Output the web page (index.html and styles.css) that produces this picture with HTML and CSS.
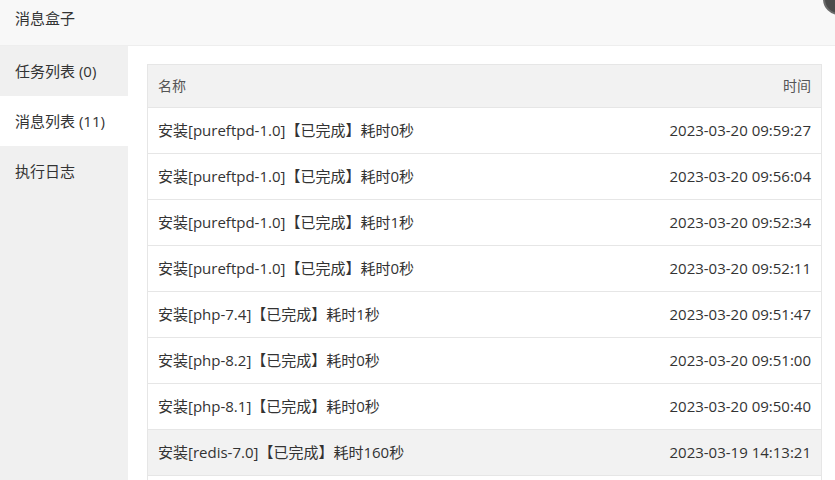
FILE: index.html
```html
<!DOCTYPE html>
<html lang="zh-CN">
<head>
  <meta charset="UTF-8" />
  <title>消息盒子</title>
  <link rel="stylesheet" href="styles.css">
</head>
<body>
  <div class="box">
    <header class="box-title">消息盒子</header>
    <span class="close-btn"></span>
    <div class="box-body">
      <nav class="side">
        <div class="side-item">任务列表 (0)</div>
        <div class="side-item active">消息列表 (11)</div>
        <div class="side-item">执行日志</div>
      </nav>
      <section class="content">
        <table class="msg-table">
          <thead>
            <tr><th>名称</th><th class="right">时间</th></tr>
          </thead>
          <tbody>
            <tr><td>安装[pureftpd-1.0]【已完成】耗时0秒</td><td class="right">2023-03-20 09:59:27</td></tr>
            <tr><td>安装[pureftpd-1.0]【已完成】耗时0秒</td><td class="right">2023-03-20 09:56:04</td></tr>
            <tr><td>安装[pureftpd-1.0]【已完成】耗时1秒</td><td class="right">2023-03-20 09:52:34</td></tr>
            <tr><td>安装[pureftpd-1.0]【已完成】耗时0秒</td><td class="right">2023-03-20 09:52:11</td></tr>
            <tr><td>安装[php-7.4]【已完成】耗时1秒</td><td class="right">2023-03-20 09:51:47</td></tr>
            <tr><td>安装[php-8.2]【已完成】耗时0秒</td><td class="right">2023-03-20 09:51:00</td></tr>
            <tr><td>安装[php-8.1]【已完成】耗时0秒</td><td class="right">2023-03-20 09:50:40</td></tr>
            <tr class="hover"><td>安装[redis-7.0]【已完成】耗时160秒</td><td class="right">2023-03-19 14:13:21</td></tr>
            <tr><td></td><td></td></tr>
          </tbody>
        </table>
      </section>
    </div>
  </div>
</body>
</html>
```

FILE: styles.css
```css
* {
  margin: 0;
  padding: 0;
  box-sizing: border-box;
}
body {
  font-family: "Open Sans", "Noto Sans CJK SC", sans-serif;
  color: #333;
  background: #fff;
  overflow: hidden;
}
.box {
  position: relative;
  width: 835px;
  height: 480px;
  overflow: hidden;
}
.box-title {
  height: 46px;
  line-height: 36px;
  padding-left: 15px;
  font-size: 15px;
  background: #f8f8f8;
  border-bottom: 1px solid #eee;
}
.close-btn {
  position: absolute;
  top: -17px;
  right: -20px;
  width: 32px;
  height: 32px;
  border-radius: 50%;
  background: #4b4b4b;
  border: 2px solid #6a6a6a;
}
.box-body {
  display: flex;
  height: 434px;
}
.side {
  width: 128px;
  background: #f0f0f0;
  flex-shrink: 0;
}
.side-item {
  height: 50px;
  line-height: 50px;
  padding-left: 15px;
  font-size: 15px;
  color: #333;
}
.side-item.active {
  background: #fff;
}
.content {
  flex: 1;
  padding: 18px 13px 0 19px;
}
.msg-table {
  width: 100%;
  border-collapse: collapse;
  font-size: 15px;
  border: 1px solid #e6e6e6;
}
.msg-table th,
.msg-table td {
  border-top: 1px solid #e6e6e6;
  border-bottom: 1px solid #e6e6e6;
  height: 46px;
  padding: 0 10px 2px;
  text-align: left;
  font-weight: normal;
  white-space: nowrap;
}
.msg-table th {
  height: 43px;
  background: #f2f2f2;
  color: #555;
  font-size: 14px;
}
.msg-table .right {
  text-align: right;
}
.msg-table tr.hover td {
  background: #f2f2f2;
}
```
